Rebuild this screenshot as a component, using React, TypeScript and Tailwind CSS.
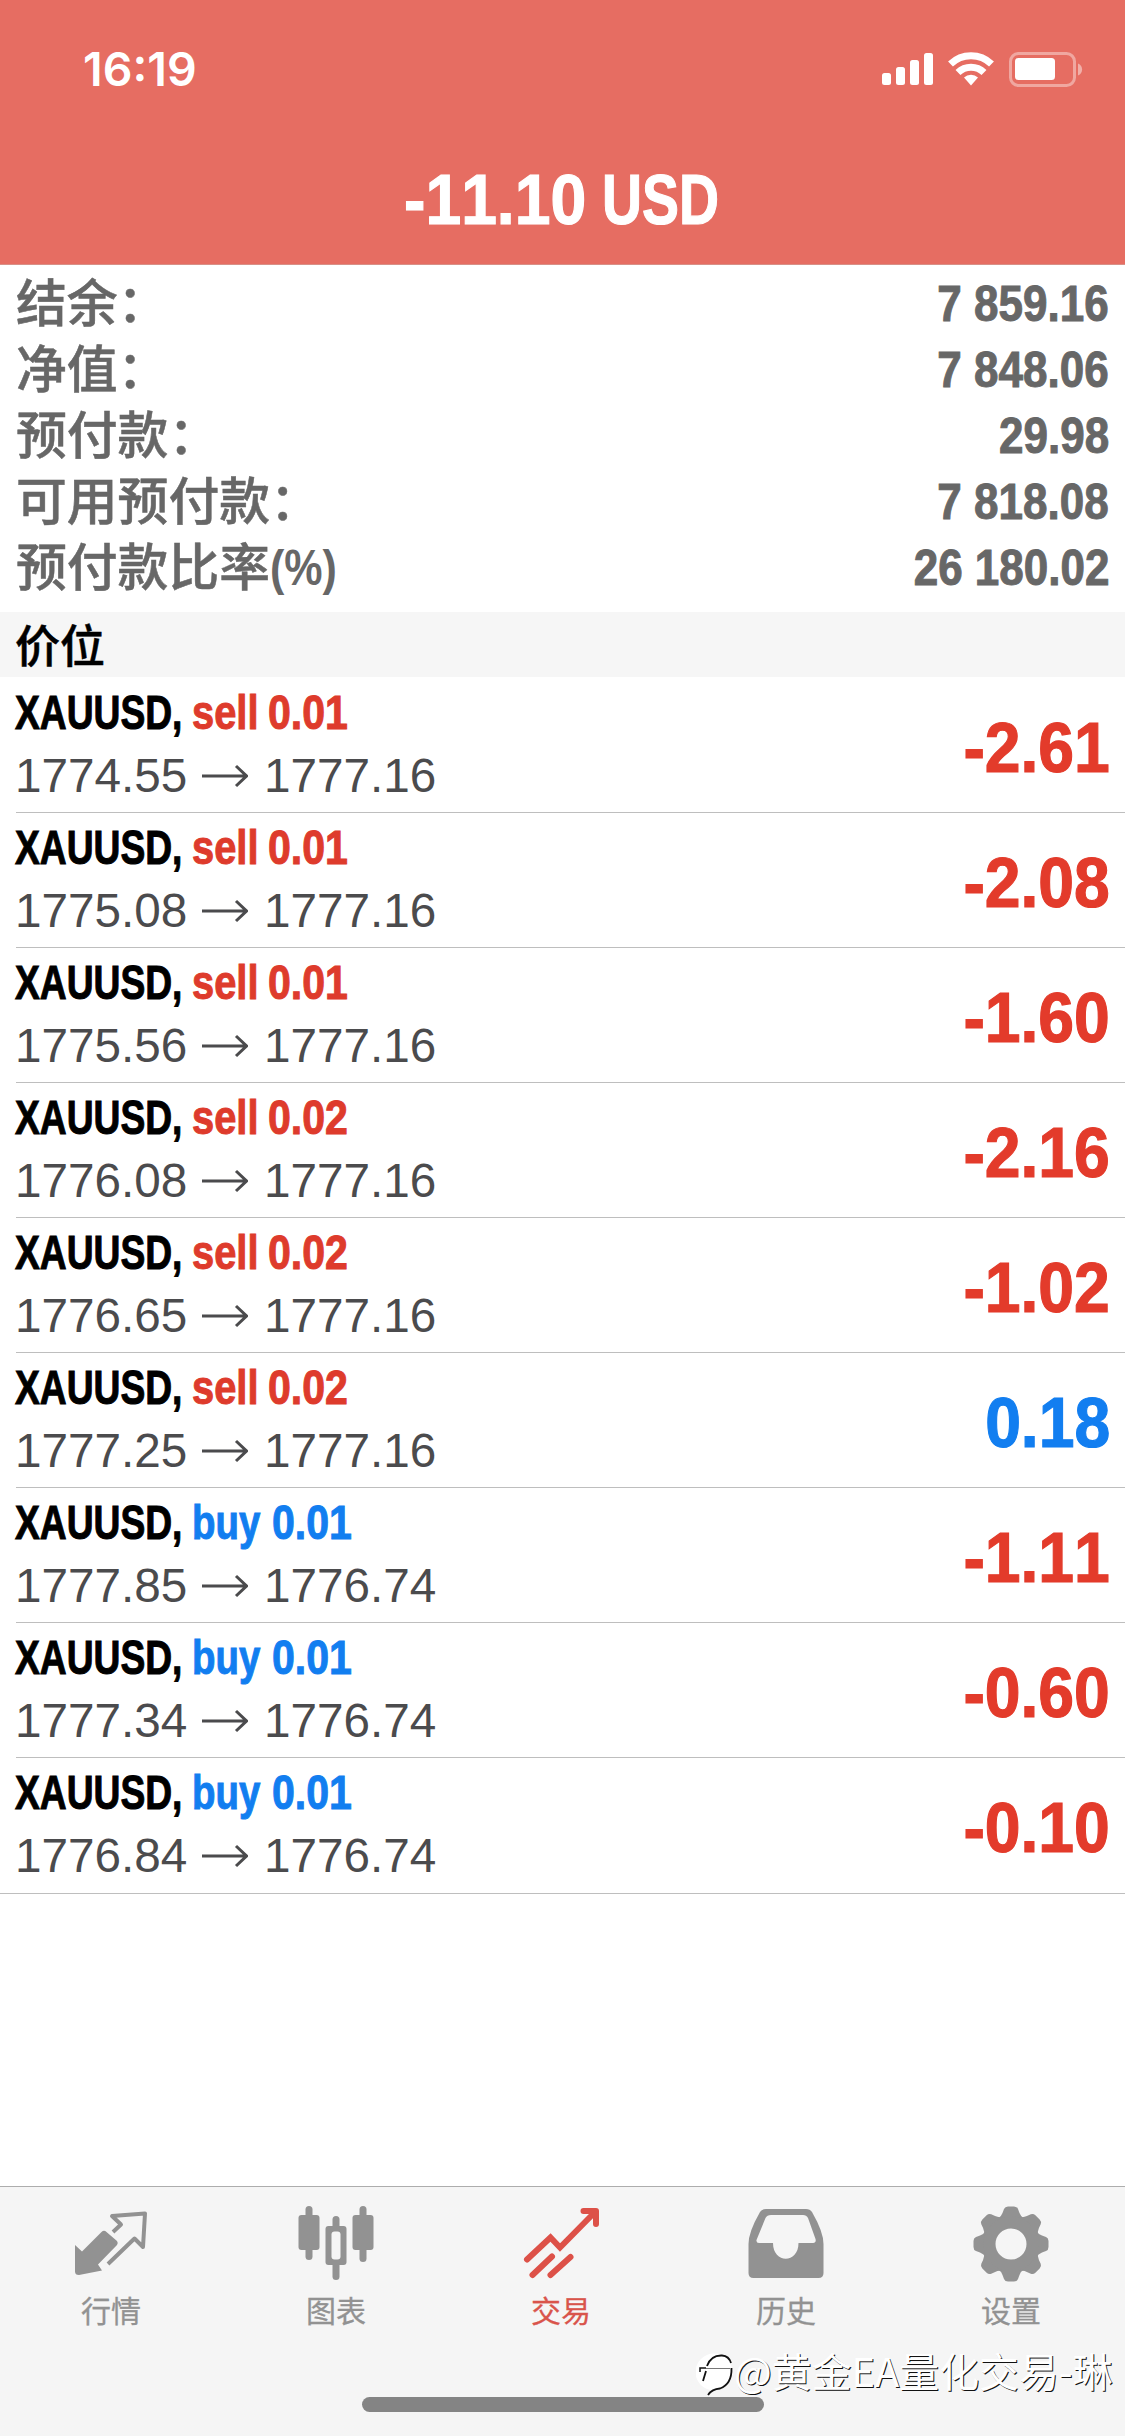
import { ReactNode } from "react";

const summary = [
  { label: "结余：", value: "7 859.16" },
  { label: "净值：", value: "7 848.06" },
  { label: "预付款：", value: "29.98" },
  { label: "可用预付款：", value: "7 818.08" },
  { label: "预付款比率", unit: "(%)", value: "26 180.02" },
];

const positions = [
  { side: "sell", volume: "0.01", open: "1774.55", current: "1777.16", profit: "-2.61" },
  { side: "sell", volume: "0.01", open: "1775.08", current: "1777.16", profit: "-2.08" },
  { side: "sell", volume: "0.01", open: "1775.56", current: "1777.16", profit: "-1.60" },
  { side: "sell", volume: "0.02", open: "1776.08", current: "1777.16", profit: "-2.16" },
  { side: "sell", volume: "0.02", open: "1776.65", current: "1777.16", profit: "-1.02" },
  { side: "sell", volume: "0.02", open: "1777.25", current: "1777.16", profit: "0.18" },
  { side: "buy", volume: "0.01", open: "1777.85", current: "1776.74", profit: "-1.11" },
  { side: "buy", volume: "0.01", open: "1777.34", current: "1776.74", profit: "-0.60" },
  { side: "buy", volume: "0.01", open: "1776.84", current: "1776.74", profit: "-0.10" },
];

function StatusIcons() {
  return (
    <svg width="202" height="36" viewBox="0 0 202 36" fill="#fff">
      <rect x="0" y="21" width="9" height="12" rx="2.5" />
      <rect x="14" y="15" width="9" height="18" rx="2.5" />
      <rect x="28" y="8" width="9" height="25" rx="2.5" />
      <rect x="42" y="1" width="9" height="32" rx="2.5" />
      <g fill="none" stroke="#fff" strokeWidth="7">
        <path d="M68.500 12a29.500 29.500 0 0 1 41 0" />
        <path d="M76 20.500a18.500 18.500 0 0 1 26 0" />
      </g>
      <path d="M82 25.500a10 10 0 0 1 14 0L89 33.500z" />
      <rect x="128.500" y="1.500" width="64" height="32" rx="8" fill="none" stroke="#fff" strokeOpacity=".4" strokeWidth="3" />
      <rect x="133" y="6" width="40" height="22" rx="3.500" />
      <path d="M196 11.500c5.500 2 5.500 10 0 12z" fillOpacity=".45" />
    </svg>
  );
}

function QuotesIcon() {
  return (
    <svg width="76" height="76" viewBox="0 0 76 76" fill="#929292">
      <path d="M2 39 L9 45.500 L28.500 26 Q31 23.500 33.500 26 L44 35 Q45.500 37 44 39 L25 58.500 L29 64.500 L6 69 Q2 69 2 65.500z" />
      <path d="M40 26 L48 18.500 L39 10 L72 7.500 L70 41 L61.500 32.500 L35 58" fill="none" stroke="#929292" strokeWidth="4" strokeLinejoin="round" />
    </svg>
  );
}

function ChartIcon() {
  return (
    <svg width="76" height="76" viewBox="0 0 76 76" fill="#929292">
      <rect x="7.500" y="0" width="7" height="54" rx="3.500" />
      <rect x="0.500" y="9" width="21" height="35" rx="3" />
      <rect x="34.500" y="10" width="7" height="64" rx="3.500" />
      <rect x="27.500" y="20" width="21" height="39" rx="3" />
      <rect x="33.500" y="25.500" width="9" height="28" rx="3" fill="#f5f5f5" />
      <rect x="61.500" y="0" width="7" height="56" rx="3.500" />
      <rect x="54.500" y="9" width="21" height="35" rx="3" />
    </svg>
  );
}

function TradeIcon() {
  return (
    <svg width="76" height="76" viewBox="0 0 76 76" fill="none" stroke="#dd5148" strokeWidth="6" strokeLinecap="round">
      <path d="M4 53.500 L27.500 31.500 L37 41.500 L72 6" />
      <path d="M60.500 5 H73 V18" strokeLinejoin="round" />
      <path d="M9.500 69 L29 50.500 M27.500 69 L47.500 51" />
    </svg>
  );
}

function HistoryIcon() {
  return (
    <svg width="76" height="76" viewBox="0 0 76 76" fill="#929292" fillRule="evenodd">
      <path d="M18 3 H58 Q62 3 64 6 Q75.500 26 75.500 38 V67 Q75.500 72 70.500 72 H5.500 Q.5 72 .5 67 V38 Q.5 26 12 6 Q14 3 18 3z M23 9 Q19 9 17.500 12 L8.500 34 Q8 37 11 37 H25 C25 58 50.500 58 50.500 37 H65 Q68.500 37 67.500 33 L60 12 Q58.500 9 55 9z" />
    </svg>
  );
}

function SettingsIcon() {
  return (
    <svg width="76" height="76" viewBox="-38 -38 76 76" fill="#929292">
      {[0, 45, 90, 135, 180, 225, 270, 315].map((angle) => (
        <path
          key={angle}
          transform={`rotate(${angle})`}
          d="M-13 -25.500 Q-10 -27 -8.500 -31 L-7 -35 Q-6 -37.500 -3 -37.500 H3 Q6 -37.500 7 -35 L8.500 -31 Q10 -27 13 -25.500 L8 -17 H-8z"
        />
      ))}
      <circle r="21.500" fill="none" stroke="#929292" strokeWidth="12" />
    </svg>
  );
}

function WatermarkLogo() {
  return (
    <svg width="40" height="46" viewBox="0 0 40 46" fill="none">
      <circle cx="18" cy="21" r="18.500" fill="#fff" />
      <path d="M4 21 V17 H10" stroke="#111" strokeWidth="1.500" />
      <path d="M7 30 L10 20 M11 15 Q15 4 26 4.500 Q33 5 35 12" stroke="#111" strokeWidth="1.800" />
      <path d="M10 17.500 H34" stroke="#777" strokeWidth="1" />
      <path d="M35.500 17 Q36 33 24 37.500 Q16 38 12 44" stroke="#111" strokeWidth="1.800" />
    </svg>
  );
}

const tabs: { label: string; icon: ReactNode; active?: boolean }[] = [
  { label: "行情", icon: <QuotesIcon /> },
  { label: "图表", icon: <ChartIcon /> },
  { label: "交易", icon: <TradeIcon />, active: true },
  { label: "历史", icon: <HistoryIcon /> },
  { label: "设置", icon: <SettingsIcon /> },
];

export default function App() {
  return (
    <div className="relative flex flex-col w-[1125px] h-[2436px] overflow-hidden bg-white font-['Liberation_Sans','Noto_Sans_CJK_SC',sans-serif] [font-kerning:none]">

      {/* Status bar + total */}
      <header className="h-[265px] shrink-0 bg-[#e66d62] border-b border-[#d89087] text-white">
        <div className="flex items-start justify-between pt-[52px] pl-[83px] pr-[41px] h-[158px]">
          <span className="font-[Inter,sans-serif] font-semibold text-[46.5px] leading-[34px]">16:19</span>
          <StatusIcons />
        </div>
        <h1 className="flex pl-[404px] text-[71px] leading-[84px] font-bold whitespace-nowrap [-webkit-text-stroke:1.2px]">
          <span className="w-[198px] origin-left scale-x-[0.905]">-11.10</span>
          <span className="origin-left scale-x-[0.78]">USD</span>
        </h1>
      </header>

      {/* Account summary */}
      <section className="h-[347px] shrink-0 pt-[6px] px-4 text-[#676767] font-bold">
        {summary.map((row) => (
          <div key={row.label} className="flex items-center justify-between h-[66px] whitespace-nowrap">
            <div className="flex items-center">
              <span className="mb-[8px] font-['Noto_Sans_CJK_SC',sans-serif] font-medium text-[50.8px] leading-[58px] [-webkit-text-stroke:0.5px]">{row.label}</span>
              {row.unit && <span className="origin-left scale-x-[0.86] text-[50px]">{row.unit}</span>}
            </div>
            <span className="origin-right scale-x-[0.88] text-[50px] leading-[64px] [-webkit-text-stroke:1px]">{row.value}</span>
          </div>
        ))}
      </section>

      <h2 className="h-[65px] shrink-0 bg-[#f6f6f6] pl-[15px] font-['Noto_Sans_CJK_SC',sans-serif] font-medium text-[45px] leading-[63px] text-black [-webkit-text-stroke:0.5px]">价位</h2>

      {/* Open positions */}
      <ul className="pt-px border-b border-[#bebebe] h-[1217px] shrink-0">
        {positions.map((p, i) => (
          <li
            key={i}
            className="ml-4 pr-4 flex items-center justify-between h-[135px] border-b border-[#bebebe] last:border-b-0"
          >
            <div className="pb-[2px]">
              <div className={`flex h-[63px] text-[48px] leading-[62px] font-bold whitespace-nowrap [-webkit-text-stroke:1px] ${p.side === "sell" ? "text-[#de3b2c]" : "text-[#127ef0]"}`}>
                <span className="w-[176px] -ml-px mr-px origin-left scale-x-[0.775] text-black">XAUUSD,</span>
                <span className={`origin-left ${p.side === "sell" ? "w-[76px] scale-x-[0.83]" : "w-[80px] scale-x-[0.8]"}`}>{p.side}</span>
                <span className="origin-left scale-x-[0.855]">{p.volume}</span>
              </div>
              <div className="-ml-px flex items-center h-[62px] text-[47.7px] leading-[62px] text-[#4b4b4d]">
                <span className="w-[187px]">{p.open}</span>
                <svg width="46" height="24" viewBox="0 0 46 24" fill="none" stroke="currentColor" strokeWidth="3" className="mr-4">
                  <path d="M0 12 H44 M34 2 L44.500 12 L34 22" />
                </svg>
                <span>{p.current}</span>
              </div>
            </div>
            <span className={`origin-right pt-[6px] -mr-px scale-x-[0.905] text-[71px] font-bold [-webkit-text-stroke:1.2px] ${p.profit.startsWith("-") ? "text-[#e33b2b]" : "text-[#127ef0]"}`}>
              {p.profit}
            </span>
          </li>
        ))}
      </ul>

      {/* Tab bar */}
      <nav className="mt-auto h-[250px] shrink-0 flex bg-[#f5f5f5] border-t border-[#adadad]">
        {tabs.map((tab) => (
          <div
            key={tab.label}
            className={`w-[225px] flex flex-col items-center pt-[19px] pr-[3px] ${tab.active ? "text-[#d9544b]" : "text-[#929292]"}`}
          >
            {tab.icon}
            <span className="mt-[7px] font-['Noto_Sans_CJK_SC',sans-serif] text-[30px] leading-10 [-webkit-text-stroke:0.3px]">{tab.label}</span>
          </div>
        ))}
      </nav>

      {/* Home indicator */}
      <div className="absolute left-[362px] top-[2397px] w-[402px] h-[15px] rounded-full bg-[#848484]" />

      {/* Watermark */}
      <div className="absolute left-[696px] top-[2351px] flex items-start text-white whitespace-nowrap">
        <WatermarkLogo />
        <span className="-ml-[2px] font-['Noto_Sans_CJK_SC',sans-serif] font-normal text-[39.9px] leading-[38px] [text-shadow:1px_1px_0.5px_#111]">@黄金EA量化交易-琳</span>
      </div>
    </div>
  );
}
